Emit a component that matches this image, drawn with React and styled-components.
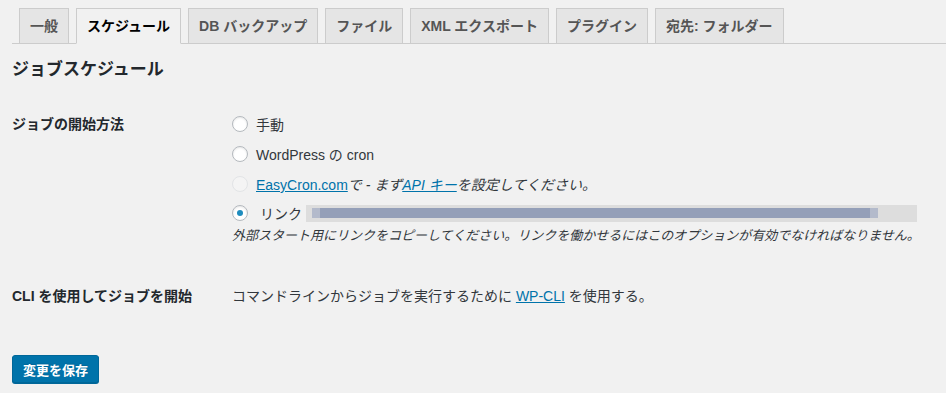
import styled, { createGlobalStyle } from "styled-components";

const GlobalStyle = createGlobalStyle`
  body {
    margin: 0;
    background: #f1f1f1;
    color: #23282d;
    font-family: "Liberation Sans", "Noto Sans CJK JP", sans-serif;
  }
`;

const Page = styled.div`
  padding: 8px 0 10px 12px;
`;

const TabBar = styled.nav`
  display: flex;
  border-bottom: 1px solid #ccc;
`;

const Tab = styled.a`
  margin-left: 7px;
  margin-bottom: -1px;
  padding: 5px 10px;
  font-size: 14px;
  line-height: 24px;
  font-weight: 700;
  border: 1px solid #ccc;
  border-bottom-color: ${(p) => (p.$active ? "#f1f1f1" : "#ccc")};
  background: ${(p) => (p.$active ? "#f1f1f1" : "#e5e5e5")};
  color: ${(p) => (p.$active ? "#000" : "#555")};
  white-space: nowrap;
  cursor: pointer;
`;

const Title = styled.h2`
  margin: 14px 0 0;
  font-size: 17px;
  line-height: 24px;
  font-weight: 700;
`;

const Row = styled.div`
  display: grid;
  grid-template-columns: 220px 1fr;
  margin-top: ${(p) => p.$top}px;
`;

const Label = styled.div`
  padding-top: ${(p) => p.$pad || 0}px;
  font-size: 14px;
  line-height: 20px;
  font-weight: 700;
`;

const Options = styled.div`
  display: flex;
  flex-direction: column;
`;

const Option = styled.label`
  display: flex;
  align-items: center;
  gap: ${(p) => p.$gap || 8}px;
  height: ${(p) => p.$h || 30}px;
  font-size: 14px;
  color: #32373c;
  white-space: nowrap;
`;

const Radio = styled.span`
  position: relative;
  box-sizing: border-box;
  width: 16px;
  height: 16px;
  flex: none;
  border-radius: 50%;
  border: 1px solid ${(p) => (p.$disabled ? "#e2e4e6" : "#b4b9be")};
  background: ${(p) => (p.$disabled ? "#f4f4f4" : "#fff")};
  box-shadow: ${(p) => (p.$disabled ? "none" : "inset 0 1px 2px rgba(0,0,0,.1)")};

  &::before {
    content: "";
    display: ${(p) => (p.$checked ? "block" : "none")};
    position: absolute;
    left: 4px;
    top: 4px;
    width: 6px;
    height: 6px;
    border-radius: 50%;
    background: #1e8cbe;
  }
`;

const Link = styled.a`
  color: #0073aa;
  text-decoration: underline;
  font-style: ${(p) => (p.$italic ? "italic" : "normal")};
  cursor: pointer;
`;

const Em = styled.span`
  font-style: italic;
`;

const UrlBox = styled.div`
  display: flex;
  flex: none;
  align-items: center;
  width: 611px;
  height: 17px;
  margin-left: -8px;
  padding-left: 6px;
  box-sizing: border-box;
  background: #dddddd;
`;

const Blur = styled.div`
  width: 566px;
  height: 10px;
  background: linear-gradient(
    to right,
    #b3bacb 0,
    #b3bacb 8px,
    #949fb8 8px,
    #949fb8 558px,
    #b3bacb 558px
  );
`;

const Description = styled.p`
  margin: 0;
  font-size: 13px;
  line-height: 18px;
  font-style: italic;
  color: #32373c;
  white-space: nowrap;
`;

const Text = styled.div`
  font-size: 14px;
  line-height: 20px;
  color: #32373c;
`;

const SaveButton = styled.button`
  margin-top: 49px;
  height: 28px;
  padding: 0 10px;
  border: 1px solid #006799;
  border-radius: 3px;
  background: #0073aa;
  box-shadow: 0 1px 0 #006799;
  color: #fff;
  font-family: inherit;
  font-size: 13px;
  font-weight: 700;
  text-shadow: 0 -1px 1px #006799;
  cursor: pointer;
`;

const tabs = [
  "一般",
  "スケジュール",
  "DB バックアップ",
  "ファイル",
  "XML エクスポート",
  "プラグイン",
  "宛先: フォルダー",
];

export default function App() {
  return (
    <Page>
      <GlobalStyle />
      <TabBar>
        {tabs.map((t, i) => (
          <Tab key={t} $active={i === 1}>
            {t}
          </Tab>
        ))}
      </TabBar>
      <Title>ジョブスケジュール</Title>

      <Row $top={27}>
        <Label $pad={5}>ジョブの開始方法</Label>
        <Options>
          <Option>
            <Radio />
            手動
          </Option>
          <Option>
            <Radio />
            WordPress の cron
          </Option>
          <Option>
            <Radio $disabled />
            <span>
              <Link>EasyCron.com</Link>
              <Em>で - まず</Em>
              <Link $italic>API キー</Link>
              <Em>を設定してください。</Em>
            </span>
          </Option>
          <Option $h={28} $gap={12}>
            <Radio $checked />
            <span>リンク</span>
            <UrlBox>
              <Blur />
            </UrlBox>
          </Option>
          <Description>
            外部スタート用にリンクをコピーしてください。リンクを働かせるにはこのオプションが有効でなければなりません。
          </Description>
        </Options>
      </Row>

      <Row $top={41}>
        <Label>CLI を使用してジョブを開始</Label>
        <Text>
          コマンドラインからジョブを実行するために <Link>WP-CLI</Link> を使用する。
        </Text>
      </Row>

      <SaveButton>変更を保存</SaveButton>
    </Page>
  );
}
